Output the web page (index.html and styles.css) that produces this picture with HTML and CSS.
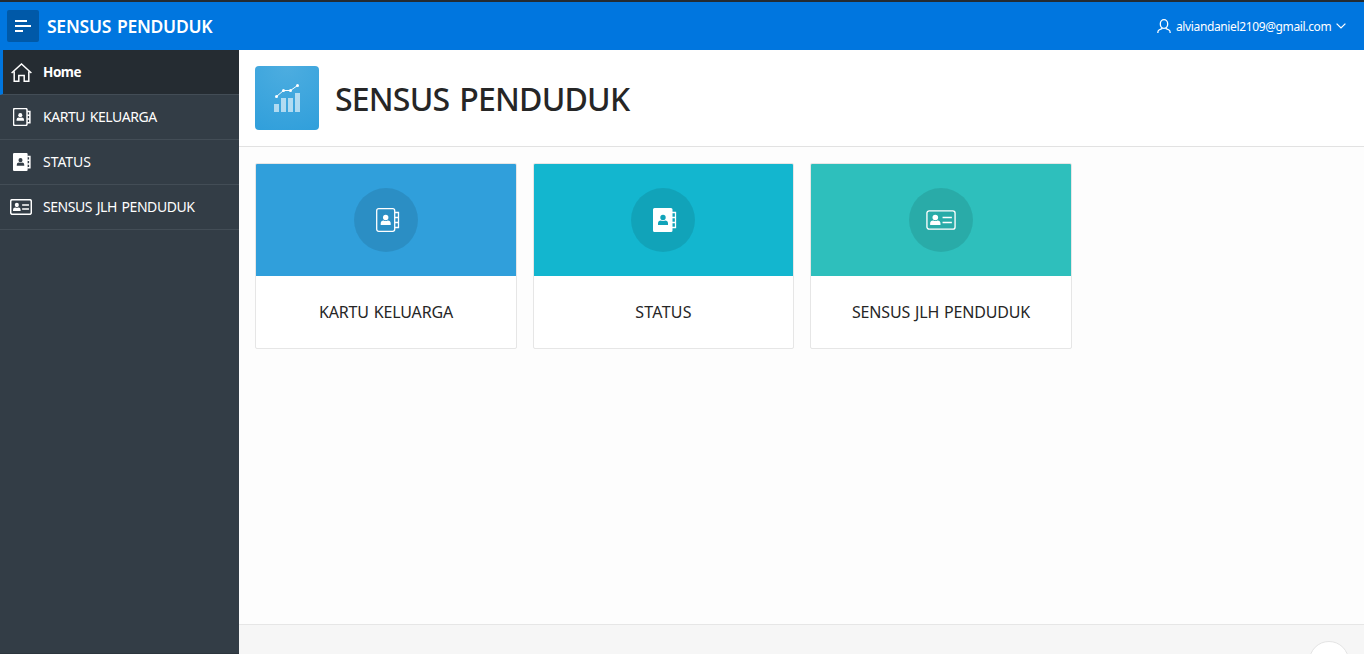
FILE: index.html
```
<!DOCTYPE html>
<html lang="id">
<head>
<meta charset="utf-8">
<title>SENSUS PENDUDUK</title>
<link rel="stylesheet" href="styles.css">
</head>
<body>
<svg class="defs" aria-hidden="true">
  <symbol id="book" viewBox="0 0 24 24">
    <rect x=".7" y=".7" width="18" height="22.600" rx="2" fill="none" stroke="currentColor" stroke-width="var(--line)"/>
    <path d="M19 4.500h3.500v15H19M19 9.500h3.500M19 14.500h3.500" fill="none" stroke="currentColor" stroke-width="var(--line)"/>
    <circle cx="9.700" cy="9.500" r="2.700" fill="currentColor"/>
    <path d="M4.700 17v-1.500a3 3 0 0 1 3-3q2 1.200 4 0a3 3 0 0 1 3 3V17z" fill="currentColor"/>
  </symbol>
  <symbol id="book-solid" viewBox="0 0 24 24">
    <path fill-rule="evenodd" fill="currentColor" d="M1.500 0H18a1.500 1.500 0 0 1 1.500 1.500v21A1.500 1.500 0 0 1 18 24H1.500A1.500 1.500 0 0 1 0 22.500v-21A1.500 1.500 0 0 1 1.500 0zM10 6.800a2.700 2.700 0 1 0 0 5.400 2.700 2.700 0 0 0 0-5.400zM5 17h10v-1.500a3 3 0 0 0-3-3q-2 1.200-4 0a3 3 0 0 0-3 3z"/>
    <path d="M19 4.500h3.500v15H19M19 9.500h3.500M19 14.500h3.500" fill="none" stroke="currentColor" stroke-width="var(--line)"/>
  </symbol>
  <symbol id="idcard" viewBox="0 0 29 20">
    <rect x=".9" y=".9" width="27.200" height="18.200" rx="2.200" fill="none" stroke="currentColor" stroke-width="var(--line)"/>
    <circle cx="9" cy="7.500" r="2.700" fill="currentColor"/>
    <path d="M4 15v-1.500a3 3 0 0 1 3-3q2 1.200 4 0a3 3 0 0 1 3 3V15z" fill="currentColor"/>
    <path d="M16 7.500h9M16 12.500h9" stroke="currentColor" stroke-width="var(--line)"/>
  </symbol>
</svg>
<header class="header">
  <button class="menu-btn" aria-label="Menu"><svg width="16" height="12" viewBox="0 0 16 12"><path d="M0 1h12M0 6h16M0 11h8" stroke="#fff" stroke-width="2"/></svg></button>
  <span class="brand">SENSUS PENDUDUK</span>
  <div class="user">
    <svg width="14" height="15" viewBox="0 0 14 15" fill="none" stroke="currentColor" stroke-width="1.300"><ellipse cx="7" cy="5" rx="3.700" ry="4.300"/><path d="M5 8.700v.8L2 11Q.8 11.700.8 14M9 8.700v.8l3 1.500q1.200.7 1.200 3"/></svg>
    <span class="email">alviandaniel2109@gmail.com</span>
    <svg class="chevron" width="10" height="6" viewBox="0 0 10 6"><path d="M.6.6 5 4.900 9.400.6" fill="none" stroke="currentColor" stroke-width="1.300"/></svg>
  </div>
</header>
<div class="body">
  <nav class="nav">
    <a class="nav-item active"><span class="nav-icon home"><svg width="21" height="19" viewBox="0 0 21 19" fill="none" stroke="currentColor" stroke-width="1.500"><path d="M.6 10 10.500 1l9.900 9M3.200 8.500v9.700h4.600v-5.700h5.400v5.700h4.600V8.500"/></svg></span><span class="nav-text">Home</span></a>
    <a class="nav-item"><span class="nav-icon book"><svg width="18" height="18"><use href="#book"/></svg></span><span class="nav-text">KARTU KELUARGA</span></a>
    <a class="nav-item"><span class="nav-icon book"><svg width="18" height="18"><use href="#book-solid"/></svg></span><span class="nav-text short">STATUS</span></a>
    <a class="nav-item"><span class="nav-icon"><svg width="22" height="16" viewBox="0 0 29 20" preserveAspectRatio="none"><use href="#idcard" width="29" height="20"/></svg></span><span class="nav-text">SENSUS JLH PENDUDUK</span></a>
  </nav>
  <main class="main">
    <section class="hero">
      <div class="app-icon"><svg width="28" height="30" viewBox="0 0 28 30"><path d="M1 21h5v8H1zM8 15h5v14H8zM15 15h5v14h-5zM22 10h5v19h-5z" fill="#fff" fill-opacity=".6"/><path d="m3.500 13.500 7-6h7l7-5" fill="none" stroke="#fff"/><g fill="#fff"><circle cx="3.500" cy="13.500" r="1.500"/><circle cx="10.500" cy="7.500" r="1.500"/><circle cx="17.500" cy="7.500" r="1.500"/><circle cx="24.500" cy="2.500" r="1.500"/></g></svg></div>
      <h1 class="title">SENSUS PENDUDUK</h1>
    </section>
    <section class="cards">
      <a class="card"><div class="card-top blue"><span class="disc"><svg class="card-book" width="24" height="24"><use href="#book"/></svg></span></div><div class="card-label">KARTU KELUARGA</div></a>
      <a class="card"><div class="card-top cyan"><span class="disc"><svg class="card-book" width="24" height="24"><use href="#book-solid"/></svg></span></div><div class="card-label short">STATUS</div></a>
      <a class="card"><div class="card-top teal"><span class="disc"><svg width="30" height="20" viewBox="0 0 29 20" preserveAspectRatio="none"><use href="#idcard" width="29" height="20"/></svg></span></div><div class="card-label">SENSUS JLH PENDUDUK</div></a>
    </section>
    <footer class="footer"><span class="to-top"></span></footer>
  </main>
</div>
</body>
</html>
```

FILE: styles.css
```
* { box-sizing: border-box; }
body { margin: 0; height: 654px; overflow: hidden; display: flex; flex-direction: column; font-family: "Noto Sans", "Open Sans", sans-serif; background: #fdfdfd; --line: 1.3; }
.defs { position: absolute; width: 0; height: 0; }
.header { height: 50px; flex: none; border-top: 2px solid #242b31; background: #0076df; color: #fff; display: flex; align-items: center; padding: 0 18px 0 7px; }
.menu-btn { width: 32px; height: 32px; border: 0; border-radius: 2px; padding: 0; background: #0059a8; display: flex; align-items: center; justify-content: center; margin-right: 8px; }
.brand { font-size: 17.5px; font-weight: 600; line-height: 24px; letter-spacing: -.25px; word-spacing: 1.5px; white-space: nowrap; }
.user { margin-left: auto; display: flex; align-items: center; height: 24px; }
.email { font-size: 12px; margin-left: 5px; width: 155px; letter-spacing: -.37px; white-space: nowrap; padding-top: 1px; }
.chevron { margin: 0 0 0 5px; }
.body { flex: 1; min-height: 0; display: flex; }
.nav { width: 239px; flex: none; background: #333d46; color: #fff; --line: 2; border-bottom: 1px solid #2c353d; }
.nav-item { height: 45px; display: flex; align-items: center; border-bottom: 1px solid #434d56; padding-left: 10px; font-size: 14px; letter-spacing: -.45px; word-spacing: 1.5px; white-space: nowrap; }
.nav-item.active { background: #252c32; border-left: 3px solid #0076df; padding-left: 7px; font-weight: 700; font-size: 13.5px; }
.nav-text { padding-bottom: 2px; }
.active .nav-text { padding-bottom: 0; }
.nav-text.short { letter-spacing: -.05px; }
.nav-icon { width: 33px; display: flex; flex: none; }
.nav-icon.home { padding: 1px 0 0 1px; }
.nav-icon.book { padding-left: 3px; }
.main { flex: 1; display: flex; flex-direction: column; min-width: 0; }
.hero { height: 97px; flex: none; display: flex; align-items: center; padding: 0 16px; gap: 16px; background: #fff; border-bottom: 1px solid #e2e2e2; }
.app-icon { width: 64px; height: 64px; border-radius: 4px; background: radial-gradient(circle at 50% 0, #4dade0, #309fdb 100%); display: flex; align-items: center; justify-content: center; }
.title { margin: 2px 0 0; font-size: 32px; font-weight: 500; line-height: 40px; color: #262626; letter-spacing: -.8px; word-spacing: 2.5px; white-space: nowrap; }
.cards { flex: 1; display: grid; grid-template-columns: 262px 261px 262px; gap: 16px; padding: 16px; align-content: start; }
.card { height: 186px; background: #fff; border: 1px solid #e6e6e6; border-radius: 2px; overflow: hidden; }
.card-top { height: 112px; display: flex; align-items: center; justify-content: center; color: #fff; }
.blue { background: #309fdb; }
.cyan { background: #13b6cf; padding-right: 1px; }
.teal { background: #2ebfbc; }
.disc { width: 64px; height: 64px; border-radius: 50%; background: rgba(0, 0, 0, .1); display: flex; align-items: center; justify-content: center; }
.card-book { margin-left: 4px; }
.card-label { height: 72px; display: flex; align-items: center; justify-content: center; font-size: 16px; letter-spacing: -.18px; word-spacing: 1px; color: #262626; white-space: nowrap; }
.card-label.short { letter-spacing: .25px; }
.footer { height: 30px; flex: none; overflow: hidden; background: #f6f6f6; border-top: 1px solid #e6e6e6; display: flex; justify-content: flex-end; padding: 16px 15px 0 0; }
.to-top { width: 40px; height: 40px; flex: none; border: 1px solid #e4e4e4; border-radius: 50%; background: #fff; }
```
